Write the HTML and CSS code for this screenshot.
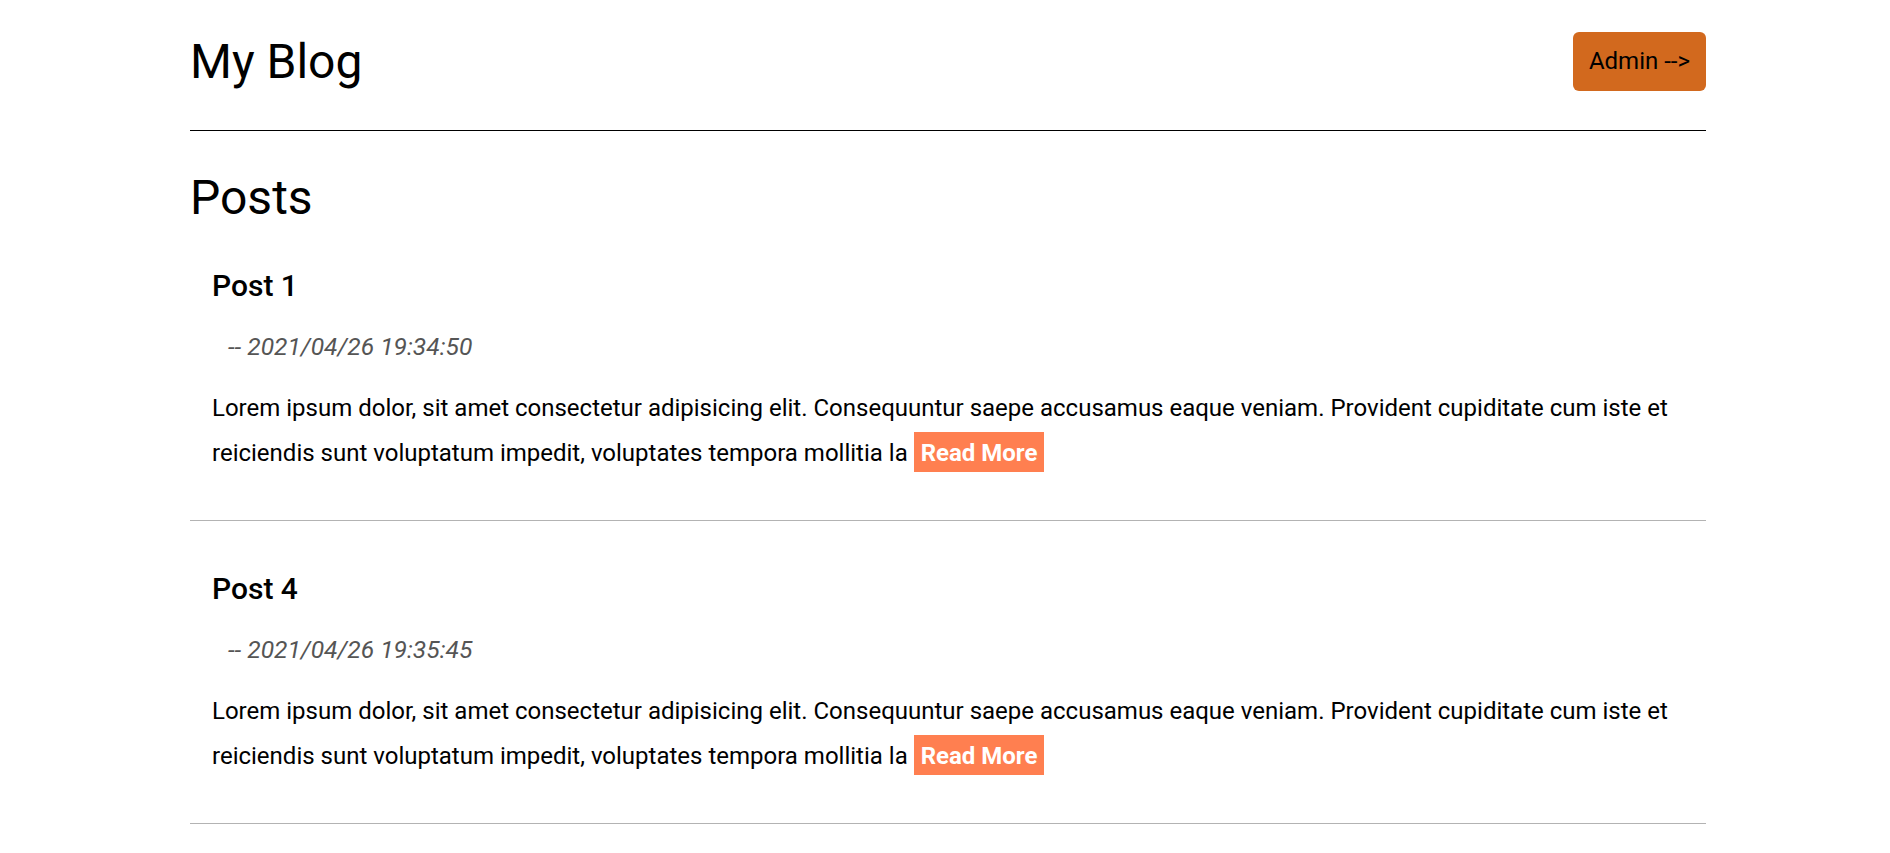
FILE: index.html
```html
<!DOCTYPE html>
<html lang="en">
<head>
<meta charset="utf-8">
<title>My Blog</title>
<link rel="stylesheet" href="styles.css">
</head>
<body>
<div class="container">
  <header class="site-header">
    <h1 class="site-title">My Blog</h1>
    <a class="admin-btn" href="#">Admin --&gt;</a>
  </header>
  <main>
    <h2 class="section-title">Posts</h2>
    <article class="post">
      <h3 class="post-title">Post 1</h3>
      <p class="post-date">-- 2021/04/26 19:34:50</p>
      <p class="post-body">Lorem ipsum dolor, sit amet consectetur adipisicing elit. Consequuntur saepe accusamus eaque veniam. Provident cupiditate cum iste et reiciendis sunt voluptatum impedit, voluptates tempora mollitia la <a class="read-more" href="#">Read More</a></p>
    </article>
    <article class="post">
      <h3 class="post-title">Post 4</h3>
      <p class="post-date">-- 2021/04/26 19:35:45</p>
      <p class="post-body">Lorem ipsum dolor, sit amet consectetur adipisicing elit. Consequuntur saepe accusamus eaque veniam. Provident cupiditate cum iste et reiciendis sunt voluptatum impedit, voluptates tempora mollitia la <a class="read-more" href="#">Read More</a></p>
    </article>
  </main>
</div>
</body>
</html>
```

FILE: styles.css
```css
html, body {
  margin: 0;
  padding: 0;
  background: #ffffff;
}

body {
  font-family: Roboto, "Liberation Sans", Arial, sans-serif;
  color: #000000;
}

.container {
  width: 1516px;
  margin-left: calc(50% - 755px);
}

.site-header {
  display: flex;
  justify-content: space-between;
  align-items: center;
  padding: 32px 0 39px;
  border-bottom: 1px solid #000000;
}

.site-title {
  margin: 0;
  font-size: 48px;
  font-weight: 400;
  line-height: normal;
}

.admin-btn {
  display: inline-block;
  background: #d2691e;
  color: #000000;
  text-decoration: none;
  font-size: 24px;
  line-height: 29px;
  padding: 15px 16px;
  border-radius: 6px;
}

.section-title {
  margin: 47px 0 0;
  font-size: 48px;
  font-weight: 400;
  line-height: 40px;
}

.post {
  padding: 50px 22px 44px;
  border-bottom: 1px solid #b3b3b3;
}

.post-title {
  margin: 0;
  font-size: 30px;
  font-weight: 500;
  line-height: normal;
}

.post-date {
  margin: 29px 0 0;
  padding-left: 16px;
  font-size: 24.6px;
  font-style: italic;
  color: #555555;
  line-height: normal;
}

.post-body {
  margin: 25px 0 0;
  font-size: 24px;
  line-height: 45px;
}

.read-more {
  display: inline-block;
  background: #ff7f50;
  color: #ffffff;
  font-weight: 700;
  text-decoration: none;
  line-height: normal;
  padding: 7px 7px 5px;
}
```
